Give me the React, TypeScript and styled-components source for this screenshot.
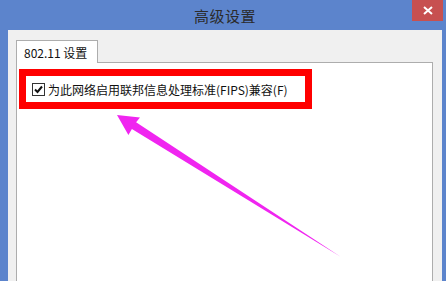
import React from "react";
import styled, { createGlobalStyle } from "styled-components";

const GlobalStyle = createGlobalStyle`
  html, body {
    margin: 0;
    padding: 0;
    background: #ffffff;
  }
  body {
    font-family: "Noto Sans CJK SC", "Noto Sans", sans-serif;
  }
`;

const Window = styled.div`
  position: relative;
  width: 446px;
  height: 281px;
  background: #5c84cc;
  display: flex;
  flex-direction: column;
  overflow: hidden;
`;
const TitleBar = styled.div`
  position: relative;
  height: 30px;
  display: flex;
  align-items: center;
  justify-content: center;
  padding-left: 4px;
`;
const Title = styled.span`
  font-size: 15px;
  color: #2b2b2b;
  letter-spacing: 0.5px;
`;
const CloseButton = styled.div`
  position: absolute;
  top: 0;
  right: 3px;
  width: 31px;
  height: 21px;
  background: #c75050;
  color: #ffffff;
  display: flex;
  align-items: center;
  justify-content: center;
`;
const Body = styled.div`
  flex: 1;
  margin: 0 4px 0 8px;
  background: #f0f0f0;
  padding: 10px 9px 0 8px;
  display: flex;
  flex-direction: column;
`;
const TabStrip = styled.div`
  display: flex;
  position: relative;
  z-index: 1;
  margin-bottom: -1px;
`;
const Tab = styled.div`
  width: 82px;
  height: 23px;
  box-sizing: border-box;
  background: #ffffff;
  border: 1px solid #adadad;
  border-bottom: none;
  font-size: 12px;
  color: #111;
  display: flex;
  align-items: center;
  padding-left: 7px;
`;
const Panel = styled.div`
  flex: 1;
  background: #ffffff;
  border: 1px solid #adadad;
  border-bottom: none;
  padding: 6px 0 0 2px;
`;
const Highlight = styled.div`
  width: 293px;
  height: 40px;
  box-sizing: border-box;
  border: 7px solid #ff0000;
  display: flex;
  align-items: center;
  padding-left: 6px;
  gap: 3px;
`;
const Box = styled.div`
  width: 13px;
  height: 13px;
  box-sizing: border-box;
  border: 1px solid #333;
  background: #fff;
  display: flex;
  align-items: center;
  justify-content: center;
`;
const Label = styled.span`
  font-size: 12px;
  color: #111;
  white-space: nowrap;
`;
const ArrowLayer = styled.svg`
  position: absolute;
  left: 0;
  top: 0;
  pointer-events: none;
`;

export default function App() {
  return (
    <>
      <GlobalStyle />
      <Window>
        <TitleBar>
          <Title>高级设置</Title>
          <CloseButton>
            <svg width="10" height="9" viewBox="0 0 10 9">
              <path d="M1 1 L9 8 M9 1 L1 8" stroke="#fff" strokeWidth="2" />
            </svg>
          </CloseButton>
        </TitleBar>
        <Body>
          <TabStrip>
            <Tab>802.11 设置</Tab>
          </TabStrip>
          <Panel>
            <Highlight>
              <Box>
                <svg width="9" height="9" viewBox="0 0 9 9">
                  <path d="M1 4.5 L3.5 7 L8 1.5" stroke="#111" strokeWidth="2" fill="none" />
                </svg>
              </Box>
              <Label>为此网络启用联邦信息处理标准(FIPS)兼容(F)</Label>
            </Highlight>
          </Panel>
        </Body>
        <ArrowLayer width="446" height="281" viewBox="0 0 446 281">
          <polygon
            points="117,115 140,117.5 136.1,122.3 341,257 131.9,129.1 128.4,135"
            fill="#f025f0"
          />
        </ArrowLayer>
      </Window>
    </>
  );
}
